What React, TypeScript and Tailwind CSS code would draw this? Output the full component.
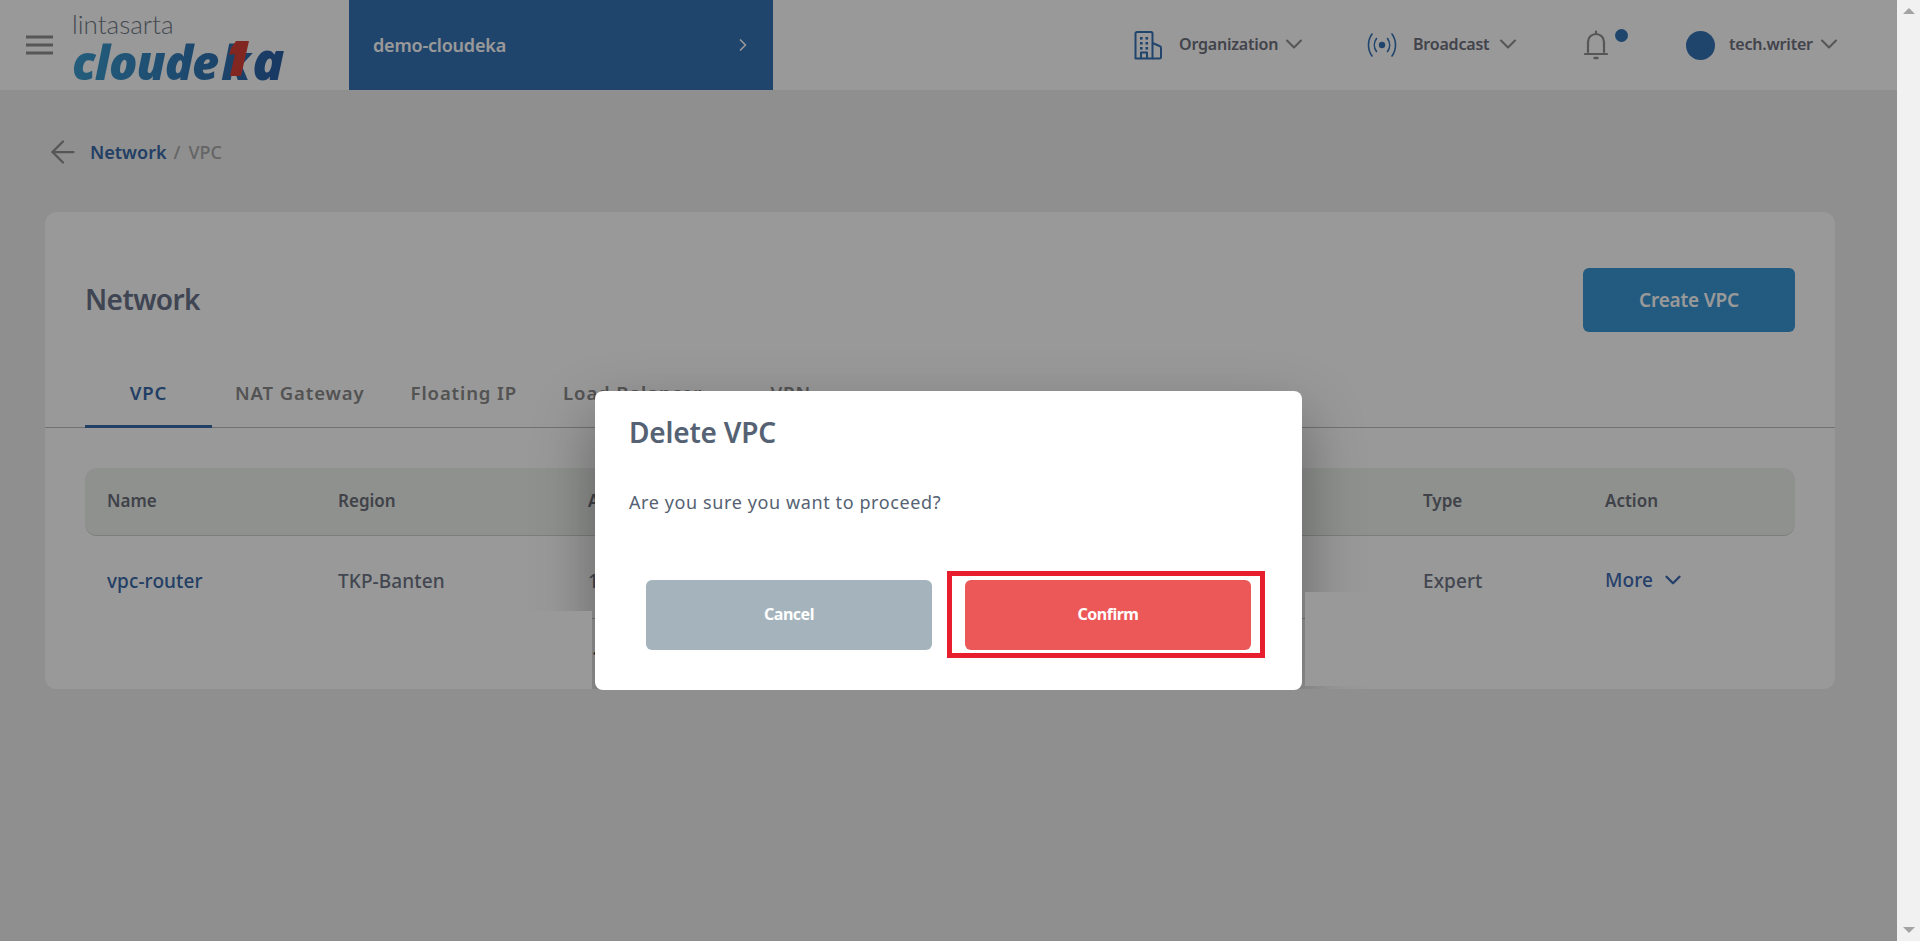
import React from 'react';
import { ArrowLeft, ChevronDown, ChevronRight } from 'lucide-react';

const font = { fontFamily: '"Noto Sans", sans-serif' };

function MenuIcon() {
  return (
    <svg width="27" height="20" viewBox="0 0 27 20" fill="none" stroke="#8f8f8f" strokeWidth="3">
      <path d="M0 2h27M0 10h27M0 18h27" />
    </svg>
  );
}

function BuildingIcon() {
  return (
    <svg width="29" height="29" viewBox="0 0 29 29" fill="none" stroke="#3573b5" strokeWidth="2" strokeLinejoin="round">
      <path d="M1.5 27.5V2.5a1.5 1.5 0 0 1 1.5-1.5h14a1.5 1.5 0 0 1 1.5 1.5v25z" />
      <path d="M18.5 12l7 3a2 2 0 0 1 1.5 2v9a1.5 1.5 0 0 1-1.5 1.5h-7" />
      <path d="M7 27.5v-6h6v6" />
      <g fill="#3573b5" stroke="none">
        <rect x="6" y="6" width="2.6" height="2.6" />
        <rect x="11.5" y="6" width="2.6" height="2.6" />
        <rect x="6" y="11" width="2.6" height="2.6" />
        <rect x="11.5" y="11" width="2.6" height="2.6" />
        <rect x="6" y="16" width="2.6" height="2.6" />
        <rect x="11.5" y="16" width="2.6" height="2.6" />
      </g>
    </svg>
  );
}

function BroadcastIcon() {
  return (
    <svg width="30" height="30" viewBox="0 0 30 30" fill="none" stroke="#3573b5" strokeWidth="1.6" strokeLinecap="round">
      <circle cx="15" cy="15" r="3.2" fill="#3573b5" stroke="none" />
      <path d="M9.5 8.5a11 11 0 0 0 0 13" />
      <path d="M20.5 8.5a11 11 0 0 1 0 13" />
      <path d="M5 4a19 19 0 0 0 0 22" />
      <path d="M25 4a19 19 0 0 1 0 22" />
    </svg>
  );
}

function BellIcon() {
  return (
    <svg width="24" height="30" viewBox="0 0 24 30" fill="none" stroke="#8f8f8f" strokeWidth="2.2" strokeLinecap="round" strokeLinejoin="round">
      <path d="M12 1.5v2.5" />
      <path d="M4 22V12a8 8 0 0 1 16 0v10" />
      <path d="M1 24h22" />
      <path d="M10.5 28h3" strokeWidth="2.4" />
    </svg>
  );
}

function NavLabel({ label, width }: { label: string; width: string }) {
  return (
    <div className="flex items-center pb-[2px]">
      <span className={`${width} text-[16px] font-semibold text-[#6e707e] tracking-[-0.2px] whitespace-nowrap`}>{label}</span>
      <ChevronDown size={28} strokeWidth={1.8} className="text-[#8f8f8f] ml-[3px]" />
    </div>
  );
}

function Logo() {
  return (
    <div className="relative w-[214px] h-[90px] ml-[19px]">
      <div className="pt-[9px] text-[26px] leading-[30px] font-light text-[#717a88]" style={{ fontFamily: 'Lato, sans-serif' }}>lintasarta</div>
      <div
        className="-mt-[1px] text-[47px] leading-[44px] font-extrabold italic tracking-[-1px] bg-gradient-to-r from-[#3c9ccf] to-[#2a5fa5] bg-clip-text text-transparent w-max"
        style={{ fontFamily: '"Open Sans", sans-serif' }}
      >
        cloude<span className="ml-[3px]">k</span><span className="ml-[3px] text-[53px]">a</span>
      </div>
      <svg className="absolute left-[156px] top-[41px]" width="22" height="36" viewBox="0 0 22 36">
        <polygon points="8,0 21,0 13,35 2,35 7,13 1,14 3,7" fill="#d9403a" />
      </svg>
    </div>
  );
}

function Header() {
  return (
    <header className="h-[90px] bg-white flex items-center shrink-0 pl-[26px]">
      <MenuIcon />
      <Logo />
      <div className="ml-[63px] w-[424px] h-full bg-[#3573b5] flex items-center justify-between pl-[24px] pr-[20px]">
        <span className="text-[18px] font-semibold text-white tracking-[-0.2px]">demo-cloudeka</span>
        <ChevronRight size={20} className="text-white" />
      </div>
      <div className="ml-[361px] flex items-center">
        <BuildingIcon />
        <div className="ml-[16px]">
          <NavLabel label="Organization" width="w-[98px]" />
        </div>
        <div className="ml-[59px]">
          <BroadcastIcon />
        </div>
        <div className="ml-[16px]">
          <NavLabel label="Broadcast" width="w-[78px]" />
        </div>
        <div className="relative w-[24px] ml-[62px]">
          <BellIcon />
          <span className="absolute left-[31px] top-[-1px] w-[13px] h-[13px] rounded-full bg-[#3573b5]" />
        </div>
        <div className="w-[29px] h-[29px] rounded-full bg-[#3573b5] ml-[78px] mr-[14px]" />
        <NavLabel label="tech.writer" width="w-[83px]" />
      </div>
    </header>
  );
}

function Tabs() {
  return (
    <div className="flex h-[70px] mt-[26px] px-[40px] border-b border-[#bdbdbd] text-[18.5px] font-semibold tracking-[0.9px] text-[#8a8a8a]">
      <div className="w-[127px] h-[70px] pt-[3px] flex items-center justify-center text-[#3a69a8] border-b-[3px] border-[#3a69a8]">VPC</div>
      <div className="flex h-[70px] items-center pl-[23px]">
        <span>NAT Gateway</span>
        <span className="ml-[46px]">Floating IP</span>
        <span className="ml-[46px]">Load Balancer</span>
        <span className="ml-[68px]">VPN</span>
      </div>
    </div>
  );
}

function VpcTable() {
  return (
    <div className="mx-[40px] mt-[40px]">
      <div className="h-[68px] flex items-center px-[22px] bg-[#eef2ee] rounded-xl border-b border-[#d0d0d0] font-semibold text-[17px] text-[#6b6e7a] pb-[2px]">
        <div className="w-[231px]">Name</div>
        <div className="w-[250px]">Region</div>
        <div className="w-[835px]">Address</div>
        <div className="w-[182px]">Type</div>
        <div>Action</div>
      </div>
      <div className="h-[83px] pt-[8px] flex items-center px-[22px] text-[19px] text-[#6f7686] font-medium tracking-[0.1px] border-b border-[#c9c9c9]">
        <div className="w-[231px] text-[#3a69a8]">vpc-router</div>
        <div className="w-[250px]">TKP-Banten</div>
        <div className="w-[835px]">10.0.0.0/24</div>
        <div className="w-[182px]">Expert</div>
        <div className="flex items-center gap-[7px] text-[#3f6cb2] -mt-[2px]">
          More
          <ChevronDown size={26} strokeWidth={2.2} />
        </div>
      </div>
      <div className="pt-[24px] pl-[507px] text-[18px] font-bold text-[#555]">1</div>
    </div>
  );
}

function DeleteDialog() {
  return (
    <div className="absolute inset-0 bg-black/40 flex justify-center pt-[391px]">
      {/* modal shadow stops at the bottom edge of the modal, page below stays clean */}
      <div className="absolute left-0 top-0 w-full h-[689px] overflow-hidden">
        <div className="absolute left-[595px] top-[391px] w-[707px] h-[299px] rounded-[8px] shadow-[0_25px_60px_rgba(0,0,0,0.35)]" />
      </div>
      {/* shadow is cut off under the row, the screenshot was patched there */}
      <div className="absolute left-[45px] top-[611px] w-[547px] h-[78px] bg-[#999999] rounded-bl-xl" />
      <div className="absolute left-[1305px] top-[592px] w-[530px] h-[94px] bg-[#999999] rounded-br-xl" />
      <div className="relative w-[707px] h-[299px] bg-white rounded-[8px] self-start px-[34px]">
        <h2 className="text-[28px] font-semibold text-[#556273] tracking-[-0.2px] leading-[38px] pt-[22px]">Delete VPC</h2>
        <p className="mt-[38px] text-[18px] leading-[26px] text-[#556273] tracking-[0.6px]">Are you sure you want to proceed?</p>
        <div className="mt-[65px] ml-[17px] flex gap-[33px] text-[16px] font-bold text-white">
          <button className="w-[286px] h-[70px] pb-[2px] rounded-[6px] bg-[#a5b3bd] tracking-[-0.5px]">Cancel</button>
          <button className="relative w-[286px] h-[70px] pb-[2px] rounded-[6px] bg-[#ec5858] tracking-[-0.5px]">
            Confirm
            <span className="absolute -left-[18px] -top-[9px] w-[318px] h-[87px] border-[5px] border-[#e61e2d]" />
          </button>
        </div>
      </div>
    </div>
  );
}

function Scrollbar() {
  return (
    <div className="w-[23px] shrink-0 bg-[#f1f1f1] flex flex-col items-center justify-between py-[8px]">
      <div className="w-0 h-0 border-x-[6px] border-x-transparent border-b-[6px] border-b-[#a3a3a3]" />
      <div className="w-0 h-0 border-x-[6px] border-x-transparent border-t-[6px] border-t-[#a3a3a3]" />
    </div>
  );
}

export default function App() {
  return (
    <div className="flex h-[941px] w-[1920px] overflow-hidden" style={font}>
      <div className="relative w-[1897px] bg-[#eeeeee] flex flex-col">
        <Header />

        {/* Breadcrumb */}
        <div className="flex items-center h-[36px] mt-[44px] ml-[45px] text-[18px] font-medium">
          <ArrowLeft size={36} strokeWidth={1.5} className="text-[#8f8f8f]" />
          <span className="ml-[9px] text-[#3a69a8] font-semibold">Network</span>
          <span className="ml-[7px] text-[#a8a8a8]">/</span>
          <span className="ml-[8px] text-[#a8a8a8]">VPC</span>
        </div>

        {/* Card */}
        <div className="mt-[42px] mx-[45px] w-[1790px] h-[477px] bg-white rounded-xl">
          <div className="flex items-center justify-between px-[40px] pt-[56px]">
            <h1 className="text-[28px] font-semibold text-[#69738a] tracking-[-0.6px] -mt-[2px]">Network</h1>
            <button className="w-[212px] h-[64px] rounded-[6px] bg-[#3b96d5] text-white text-[19px] font-semibold tracking-[-0.2px]">Create VPC</button>
          </div>
          <Tabs />
          <VpcTable />
        </div>

        <DeleteDialog />
      </div>
      <Scrollbar />
    </div>
  );
}
